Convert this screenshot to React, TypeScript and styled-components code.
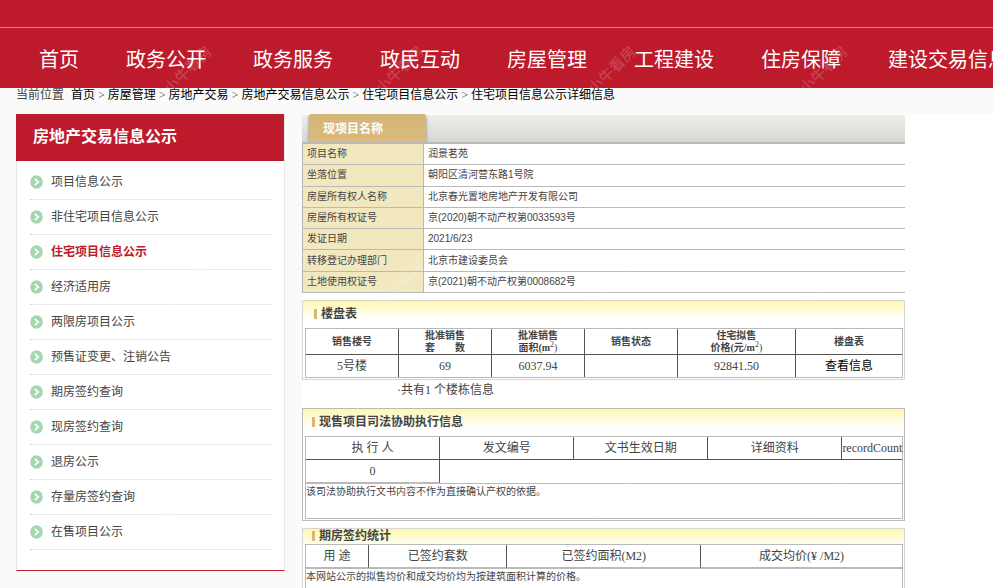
import React from "react";
import styled, { createGlobalStyle, css } from "styled-components";

const sans = '"Liberation Sans", "Noto Sans CJK SC", sans-serif';
const serif = '"Liberation Serif", "Noto Sans CJK SC", serif';

const GlobalStyle = createGlobalStyle`
  *, *::before, *::after { box-sizing: border-box; }
  body {
    margin: 0;
    background: #fafafa;
    color: #444;
    font: 12px/20px ${serif};
  }
  a { color: inherit; text-decoration: none; }
  ul { list-style: none; margin: 0; padding: 0; }
`;

const Page = styled.div`
  position: relative;
  height: 100vh;
  overflow: hidden;
`;

const Header = styled.header`
  background: #bd1a2c;
  padding-top: 27px;
`;

const Nav = styled.nav`
  display: flex;
  gap: 47px;
  height: 61px;
  padding: 0 39px;
  border-top: 1px solid #e2808a;
  overflow: hidden;
  color: #fff;
  font: 20px/64px ${sans};
  white-space: nowrap;
`;

const NavLink = styled.a`
  flex: none;
`;

const Breadcrumb = styled.nav`
  display: flex;
  height: 26px;
  padding-left: 16px;
  line-height: 14px;
  white-space: pre;
`;

const Here = styled.span`
  width: 55px;
`;

const Crumb = styled.a`
  color: #000;
`;

const Body = styled.div`
  display: grid;
  grid-template-columns: 269px minmax(0, 1fr);
  column-gap: 17px;
  align-items: start;
  padding-left: 16px;
`;

const Sidebar = styled.aside`
  background: #fff;
  border: 1px solid #e6e6e6;
  border-width: 0 1px;
  border-bottom: 1px solid #bd1a2c;
`;

const SideTitle = styled.h2`
  margin: 0 0 0 -1px;
  padding-left: 17px;
  background: #bd1a2c;
  color: #fff;
  font: bold 16px/46px ${sans};
  height: 47px;
`;

const SideList = styled.ul`
  padding: 4px 12px 20px 13px;
`;

const SideItem = styled.li`
  height: 35px;
  border-bottom: 1px dotted #d6d6d6;
`;

const SideLink = styled.a<{ $active?: boolean }>`
  display: flex;
  align-items: center;
  gap: 8px;
  height: 34px;
  font-family: ${sans};
  ${(p) =>
    p.$active &&
    css`
      color: #bd1a2c;
      font-weight: bold;
    `}
`;

const Content = styled.main`
  min-height: calc(100vh - 114px);
  padding-right: 88px;
  background: #fff;
`;

const InfoHead = styled.div`
  display: flex;
  height: 30px;
  padding-left: 7px;
  border-top: 1px solid #fff;
  border-bottom: 2px solid #b9b9b9;
  background: linear-gradient(#eeeeea, #d8d6d0);
`;

const InfoTab = styled.h2`
  margin: -1px 0 0;
  width: 117px;
  height: 28px;
  padding-left: 14px;
  border-radius: 2px 2px 0 0;
  background: linear-gradient(#d3b679, #dcb97d);
  box-shadow: 0 2px 3px rgba(90, 80, 60, 0.7);
  clip-path: inset(0 -4px 0 -4px);
  color: #fff;
  font: bold 12px/30px ${sans};
`;

const InfoTable = styled.table`
  width: 100%;
  height: 149px;
  table-layout: fixed;
  border-spacing: 0;
  border-left: 1px solid #b9b9b9;
  font: 10px/14px ${sans};
  text-align: left;

  th,
  td {
    padding: 0 4px;
    border-bottom: 1px solid #b9b9b9;
    font-weight: normal;
  }
  th {
    width: 121px;
    border-right: 1px solid #b9b9b9;
    background: #f2e8c0;
  }
`;

const Panel = styled.section<{ $light?: boolean }>`
  padding: 0 1px 1px 2px;
  border: 1px solid ${(p) => (p.$light ? "#d5d5d5" : "#b9b9b9")};
  background: linear-gradient(#fff7a8, #fffde8 12px, #fff 20px);
  margin-top: 7px;
`;

const PanelTitle = styled.h3<{ $short?: boolean; $indent?: boolean }>`
  display: flex;
  align-items: center;
  gap: 4px;
  margin: 0;
  height: ${(p) => (p.$short ? 15 : 27)}px;
  padding: 0 0 ${(p) => (p.$short ? 1 : 2)}px ${(p) => (p.$indent ? 9 : 7)}px;
  font: bold 12px/14px ${sans};

  &::before {
    content: "";
    width: 3px;
    height: 10px;
    background: #dcb673;
  }
`;

const Grid = styled.table<{ $open?: boolean }>`
  width: 100%;
  table-layout: fixed;
  border-spacing: 0;
  border: 1px solid #b9b9b9;
  border-bottom-width: ${(p) => (p.$open ? 0 : 1)}px;
  background: #fff;
  text-align: center;
  line-height: 18px;
`;

const HeadCell = styled.th<{ $small?: boolean; $last?: boolean }>`
  height: ${(p) => (p.$small ? 26 : 23)}px;
  padding: 0;
  border: 0 solid #555;
  border-right-width: 1px;
  border-bottom: 1px solid ${(p) => (p.$last ? "#b9b9b9" : "#555")};
  font-weight: normal;
  white-space: pre-line;
  &:last-child {
    border-right: 0;
  }
  ${(p) =>
    p.$small &&
    css`
      font-weight: bold;
      font-size: 10px;
      line-height: 12px;
    `}
  sup {
    font-size: 8px;
    font-weight: normal;
    line-height: 0;
  }
`;

const Cell = styled.td<{ $closed?: boolean }>`
  height: ${(p) => (p.$closed ? 23 : 22)}px;
  padding: 0;
  border-right: 1px solid #555;
  border-bottom: ${(p) => (p.$closed ? "1px solid #b9b9b9" : "0")};
  &:last-child {
    border-right: 0;
  }
`;

const DetailLink = styled.a`
  color: #000;
`;

const Unit = styled.span`
  font-weight: normal;
`;

const Summary = styled.p`
  margin: 0 0 -7px;
  height: 28px;
  padding-left: 95px;
`;

const Note = styled.p`
  margin: 0;
  min-height: 36px;
  border: 1px solid #b9b9b9;
  background: #fff;
  font: 10px/16px ${sans};
`;

const Watermarks = styled.div`
  position: absolute;
  inset: 40px 0 0 82px;
  display: grid;
  grid-template-columns: repeat(auto-fill, 212px);
  grid-auto-rows: 214px;
  overflow: hidden;
  pointer-events: none;
`;

const Mark = styled.span`
  display: grid;
  place-items: center;
  height: 60px;
  color: rgba(255, 255, 255, 0.22);
  font: 15px/16px ${sans};

  span {
    transform: rotate(-45deg);
  }
`;

const Bullet = () => (
  <svg width="13" height="14" viewBox="0 0 13 14" aria-hidden="true">
    <ellipse cx="6.5" cy="7" rx="6.3" ry="6.7" fill="#a3d7ae" />
    <path d="M4.8 3.8 8.3 7 4.8 10.2" fill="none" stroke="#fff" strokeWidth="1.8" />
  </svg>
);

const navItems = ["首页", "政务公开", "政务服务", "政民互动", "房屋管理", "工程建设", "住房保障", "建设交易信息"];

const crumbs = ["首页", "房屋管理", "房地产交易", "房地产交易信息公示", "住宅项目信息公示", "住宅项目信息公示详细信息"];

const sideItems = [
  "项目信息公示",
  "非住宅项目信息公示",
  "住宅项目信息公示",
  "经济适用房",
  "两限房项目公示",
  "预售证变更、注销公告",
  "期房签约查询",
  "现房签约查询",
  "退房公示",
  "存量房签约查询",
  "在售项目公示",
];

const info = [
  ["项目名称", "润景茗苑"],
  ["坐落位置", "朝阳区清河营东路1号院"],
  ["房屋所有权人名称", "北京春光置地房地产开发有限公司"],
  ["房屋所有权证号", "京(2020)朝不动产权第0033593号"],
  ["发证日期", "2021/6/23"],
  ["转移登记办理部门", "北京市建设委员会"],
  ["土地使用权证号", "京(2021)朝不动产权第0008682号"],
];

const Col = styled.col<{ $w: number }>`
  width: ${(p) => p.$w}%;
`;

const Columns = ({ widths }: { widths: number[] }) => (
  <colgroup>
    {widths.map((w, i) => (
      <Col key={i} $w={w} />
    ))}
  </colgroup>
);

export default function App() {
  return (
    <Page>
      <GlobalStyle />
      <Header>
        <Nav>
          {navItems.map((n) => (
            <NavLink href="#" key={n}>
              {n}
            </NavLink>
          ))}
        </Nav>
      </Header>
      <Breadcrumb>
        <Here>当前位置</Here>
        {crumbs.map((c, i) => (
          <React.Fragment key={c}>
            {i > 0 && <span>{" > "}</span>}
            <Crumb href="#">{c}</Crumb>
          </React.Fragment>
        ))}
      </Breadcrumb>
      <Body>
        <Sidebar>
          <SideTitle>房地产交易信息公示</SideTitle>
          <SideList>
            {sideItems.map((s, i) => (
              <SideItem key={s}>
                <SideLink href="#" $active={i === 2}>
                  <Bullet />
                  {s}
                </SideLink>
              </SideItem>
            ))}
          </SideList>
        </Sidebar>
        <Content>
          <InfoHead>
            <InfoTab>现项目名称</InfoTab>
          </InfoHead>
          <InfoTable>
            <tbody>
              {info.map(([k, v]) => (
                <tr key={k}>
                  <th scope="row">{k}</th>
                  <td>{v}</td>
                </tr>
              ))}
            </tbody>
          </InfoTable>

          <Panel $light>
            <PanelTitle $indent>楼盘表</PanelTitle>
            <Grid>
              <Columns widths={[15.6, 15.6, 15.6, 15.6, 19.8, 17.8]} />
              <thead>
                <tr>
                  <HeadCell $small>销售楼号</HeadCell>
                  <HeadCell $small>{"批准销售\n套　　数"}</HeadCell>
                  <HeadCell $small>
                    {"批准销售\n面积(m"}
                    <sup>2</sup>
                    <Unit>)</Unit>
                  </HeadCell>
                  <HeadCell $small>销售状态</HeadCell>
                  <HeadCell $small>
                    {"住宅拟售\n价格(元/m"}
                    <sup>2</sup>
                    <Unit>)</Unit>
                  </HeadCell>
                  <HeadCell $small>楼盘表</HeadCell>
                </tr>
              </thead>
              <tbody>
                <tr>
                  <Cell>5号楼</Cell>
                  <Cell>69</Cell>
                  <Cell>6037.94</Cell>
                  <Cell />
                  <Cell>92841.50</Cell>
                  <Cell>
                    <DetailLink href="#">查看信息</DetailLink>
                  </Cell>
                </tr>
              </tbody>
            </Grid>
          </Panel>
          <Summary>·共有1 个楼栋信息</Summary>

          <Panel>
            <PanelTitle>现售项目司法协助执行信息</PanelTitle>
            <Grid $open>
              <Columns widths={[22.5, 22.5, 22.5, 22.5, 10]} />
              <thead>
                <tr>
                  <HeadCell>执 行 人</HeadCell>
                  <HeadCell>发文编号</HeadCell>
                  <HeadCell>文书生效日期</HeadCell>
                  <HeadCell>详细资料</HeadCell>
                  <HeadCell>recordCount</HeadCell>
                </tr>
              </thead>
              <tbody>
                <tr>
                  <Cell $closed>0</Cell>
                  <td colSpan={4} />
                </tr>
              </tbody>
            </Grid>
            <Note>该司法协助执行文书内容不作为直接确认产权的依据。</Note>
          </Panel>

          <Panel $light>
            <PanelTitle $short>期房签约统计</PanelTitle>
            <Grid $open>
              <Columns widths={[10.6, 23.2, 32.5, 33.7]} />
              <thead>
                <tr>
                  <HeadCell $last>用 途</HeadCell>
                  <HeadCell $last>已签约套数</HeadCell>
                  <HeadCell $last>已签约面积(M2)</HeadCell>
                  <HeadCell $last>成交均价(¥ /M2)</HeadCell>
                </tr>
              </thead>
            </Grid>
            <Note>本网站公示的拟售均价和成交均价均为按建筑面积计算的价格。</Note>
          </Panel>
        </Content>
      </Body>
      <Watermarks aria-hidden="true">
        {Array.from({ length: 12 }, (_, i) => (
          <Mark key={i}>
            <span>小牛看房</span>
          </Mark>
        ))}
      </Watermarks>
    </Page>
  );
}
